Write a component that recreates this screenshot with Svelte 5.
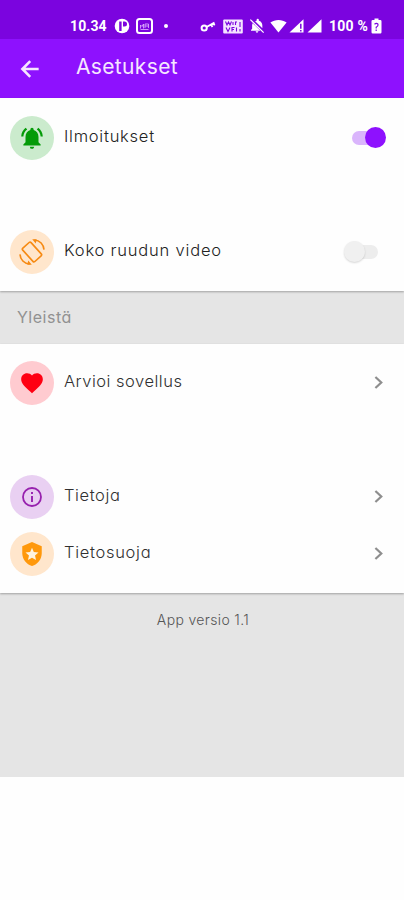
<script>
  let notifications = $state(true);
  let fullscreen = $state(false);
</script>

{#snippet chevron()}
  <svg class="chevron" width="24" height="24" viewBox="0 0 24 24"><path d="M9.400 6 15.300 11.500 9.400 17" fill="none" stroke="#8e8e8e" stroke-width="2.2" /></svg>
{/snippet}

<div class="screen">
  <div class="status">
    <span class="time">10.34</span>
    <svg class="parking" width="16" height="16" viewBox="0 0 16 16">
      <circle cx="8" cy="8" r="7.3" fill="#fff" />
      <path d="M5.200 13V3.500H7.600V13zM9 3.500H10.500a2.500 2.500 0 0 1 0 5H9z" fill="#7b04df" />
    </svg>
    <svg class="frame" width="17" height="16" viewBox="0 0 17 16">
      <rect x="1" y="1" width="15" height="14" rx="2.5" fill="none" stroke="#fff" stroke-width="2" />
      <path d="M4.500 10.500V7L6 8.500 7.500 6V10.500M9 10V6H12.500V10M9 8H12.500M4.500 11.500H12.500" fill="none" stroke="#e2b8ff" stroke-width=".8" />
    </svg>
    <span class="dot"></span>
    <svg class="key" width="16" height="14" viewBox="0 0 16 14">
      <circle cx="4.200" cy="9" r="2.600" fill="none" stroke="#fff" stroke-width="2" />
      <path d="M6.500 8 14.500 3.600M11 5.600 12.500 8M13.500 4.200 14.600 6.300" fill="none" stroke="#fff" stroke-width="1.8" />
    </svg>
    <svg class="wifi-call" width="20" height="15" viewBox="0 0 20 15">
      <rect x=".2" y=".5" width="19.600" height="14" rx="1" fill="#f4e4ff" />
      <path d="M2.500 2.500 4 6 5.500 3 7 6 8.500 2.500M10 3V6M12.500 6V3H14M3 8.500 5 12.500 7 8.500M9 12.500V8.500H11.500M9 10.500H11M13.500 8.500V12.500M17 3V8M17 10V12.500" fill="none" stroke="#7b04df" stroke-width="1.1" />
    </svg>
    <svg class="bell-off" width="16" height="16" viewBox="0 0 24 24">
      <path d="M12 22c1.100 0 2-.9 2-2h-4a2 2 0 0 0 2 2zM20 15.500V11c0-3.400-2-6.200-5.200-6.900V3a1.600 1.600 0 0 0-3.400 0v1c-.8.2-1.500.5-2.200 1zM5.500 7.800A7.500 7.500 0 0 0 4.700 11v5.200L3 18v1h14z" fill="#fff" />
      <path d="M2 2.500 22 22" stroke="#fff" stroke-width="1.900" />
    </svg>
    <svg class="wifi" width="17" height="14" viewBox="0 0 17 14"><path d="M8.500 13.500.4 3.600C5 .2 12 .2 16.600 3.600z" fill="#fff" /></svg>
    <svg class="signal" width="15" height="14" viewBox="0 0 15 14">
      <path d="M.5 13.500 14.500.3V13.500z" fill="#fff" />
      <path d="M11.800 4.700V9.700M11.800 11V12.600" stroke="#7b04df" stroke-width="1.500" />
    </svg>
    <svg class="signal second" width="15" height="14" viewBox="0 0 15 14"><path d="M.5 13.500 14.500.3V13.500z" fill="#fff" /></svg>
    <span class="percent">100 %</span>
    <svg class="battery" width="11" height="16" viewBox="0 0 11 16">
      <path d="M3.500.5H7.500V2H9.300Q10.500 2 10.500 3.200V14.200Q10.500 15.500 9.300 15.500H1.700Q.5 15.500.5 14.200V3.200Q.5 2 1.700 2H3.500z" fill="#fff" />
      <path d="M3.500 6.200Q5.500 4.500 7 6.200 7.500 7.800 5.200 9.200V10.500M5.200 11.600V13" fill="none" stroke="#7b04df" stroke-width="1.200" />
    </svg>
  </div>

  <header>
    <svg width="26" height="26" viewBox="0 0 24 24"><path d="M20 12H5M12.200 4.800 5 12 12.200 19.200" fill="none" stroke="#f6e6ff" stroke-width="2.400" /></svg>
    <h1>Asetukset</h1>
  </header>

  <section class="card">
    <div class="row">
      <span class="badge green">
        <svg width="26" height="26" viewBox="0 0 24 24"><path fill="#049b08" d="M7.580 4.080 6.150 2.650C3.750 4.480 2.170 7.300 2.030 10.500h2c.15-2.650 1.510-4.970 3.550-6.420zM19.970 10.500h2c-.15-3.200-1.730-6.020-4.120-7.850l-1.420 1.430c2.020 1.450 3.390 3.770 3.540 6.420zM18 11c0-3.070-1.640-5.640-4.500-6.320V4a1.500 1.500 0 0 0-3 0v.68C7.630 5.360 6 7.920 6 11v5l-2 2v1h16v-1l-2-2zM12 22c1.100 0 2-.9 2-2h-4a2 2 0 0 0 2 2z" /></svg>
      </span>
      <span class="label notif">Ilmoitukset</span>
      <button class="switch" class:on={notifications} aria-label="Ilmoitukset" onclick={() => (notifications = !notifications)}><i></i></button>
    </div>
    <div class="row"></div>
    <div class="row">
      <span class="badge orange">
        <svg width="28" height="28" viewBox="0 0 24 24">
          <g fill="none" stroke="#f68a13" stroke-width="1.400">
            <rect x="7.200" y="4.300" width="9.600" height="15.400" rx="1.200" transform="rotate(-42 12 12)" />
            <path d="M14 1.700C18.800 1.900 22 5.500 22.300 10M10 22.300C5.200 22.100 2 18.500 1.700 14" />
          </g>
          <path d="M12.200 1 16 1.100 15.200 4.800zM11.800 23 8 22.900 8.800 19.200z" fill="#f68a13" />
        </svg>
      </span>
      <span class="label full">Koko ruudun video</span>
      <button class="switch" class:on={fullscreen} aria-label="Koko ruudun video" onclick={() => (fullscreen = !fullscreen)}><i></i></button>
    </div>
  </section>

  <h2>Yleistä</h2>

  <section class="card general">
    <div class="row">
      <span class="badge red">
        <svg width="26" height="26" viewBox="0 0 24 24"><path fill="#ff0012" d="m12 21.350-1.450-1.320C5.400 15.360 2 12.280 2 8.500 2 5.420 4.420 3 7.500 3c1.740 0 3.410.81 4.500 2.090C13.090 3.810 14.760 3 16.500 3 19.580 3 22 5.420 22 8.500c0 3.780-3.400 6.860-8.550 11.540z" /></svg>
      </span>
      <span class="label rate">Arvioi sovellus</span>
      {@render chevron()}
    </div>
    <div class="row"></div>
    <div class="row">
      <span class="badge purple">
        <svg width="24" height="24" viewBox="0 0 24 24"><circle cx="12" cy="12" r="9" fill="none" stroke="#9721ae" stroke-width="1.800" /><path d="M12 7V9M12 11V17" stroke="#9721ae" stroke-width="1.900" /></svg>
      </span>
      <span class="label about">Tietoja</span>
      {@render chevron()}
    </div>
    <div class="row">
      <span class="badge orange">
        <svg width="26" height="26" viewBox="0 0 24 24"><path fill="#ff980b" d="M12 1 3 4.800V11c0 5.550 3.840 10.740 9 12 5.160-1.260 9-6.450 9-12V4.800z" /><path fill="#fff3df" d="m12 6.200 1.700 3.900 4.300.4-3.200 2.900.9 4.200-3.700-2.200-3.700 2.200.9-4.200L6 10.500l4.300-.4z" /></svg>
      </span>
      <span class="label privacy">Tietosuoja</span>
      {@render chevron()}
    </div>
  </section>

  <footer>App versio 1.1</footer>
</div>

<style>
  :global(body) { margin: 0; background: #fefefe; }
  .screen {
    height: 777px;
    width: 404px;
    background: #e5e5e5;
    display: flex;
    flex-direction: column;
    font-family: Inter, sans-serif;
    font-feature-settings: "cv11", "ss03";
    overflow: hidden;
  }
  .status {
    box-sizing: border-box;
    height: 39px;
    flex: none;
    background: #7b04df;
    display: flex;
    align-items: center;
    padding: 13px 0 0 70px;
    color: #fff;
    font: 700 14px/24px Roboto, sans-serif;
    white-space: nowrap;
  }
  .status svg, .dot { flex: none; }
  .time { width: 44px; letter-spacing: 0.1px; }
  .percent { width: 42px; letter-spacing: 0.2px; }
  .frame { margin-left: 6px; }
  .dot { width: 4px; height: 4px; border-radius: 50%; background: #fff; margin: 0 32px 0 11px; }
  .wifi-call { margin-left: 7px; }
  .bell-off { margin-left: 6px; }
  .wifi { margin-left: 5px; }
  .signal { margin-left: 2px; }
  .second { margin: 0 7px 0 3px; }
  header {
    height: 59px;
    flex: none;
    background: #8e11fe;
    display: flex;
    align-items: center;
    padding-left: 17px;
  }
  h1 {
    margin: -3px 0 0 33px;
    font-size: 21px;
    font-weight: 400;
    line-height: 30px;
    color: #f6e6ff;
    letter-spacing: 0.35px;
  }
  .card {
    box-sizing: border-box;
    height: 193px;
    flex: none;
    padding: 11px 14px 0 10px;
    background: #fefefe;
    box-shadow: 0 1px 2px rgba(0, 0, 0, 0.3);
  }
  .general { height: 249px; padding-top: 10px; }
  .row { height: 57px; display: flex; align-items: center; }
  .badge {
    width: 44px;
    height: 44px;
    flex: none;
    border-radius: 50%;
    display: flex;
    align-items: center;
    justify-content: center;
  }
  .green { background: #cbebcd; }
  .orange { background: #ffe6cc; }
  .red { background: #ffcbd0; }
  .purple { background: #e9d0f2; }
  .label {
    margin: -4px auto 0 10px;
    font-size: 16.5px;
    font-weight: 300;
    line-height: 24px;
    color: #222;
    white-space: nowrap;
  }
  .notif { letter-spacing: 0.75px; }
  .full { letter-spacing: 0.8px; }
  .rate { letter-spacing: 0.5px; }
  .about { letter-spacing: 0.6px; }
  .privacy { letter-spacing: 0.7px; }
  .switch {
    border: 0;
    padding: 0;
    width: 26px;
    height: 14px;
    margin-right: 12px;
    border-radius: 7px;
    background: #ededed;
    display: flex;
    align-items: center;
  }
  .switch i {
    width: 21px;
    height: 21px;
    flex: none;
    margin-left: -8px;
    border-radius: 50%;
    background: #f0f0f0;
    box-shadow: 0 1px 2px rgba(0, 0, 0, 0.16);
  }
  .switch.on { background: #dab5fc; }
  .switch.on i { margin-left: 13px; background: #8e11fe; box-shadow: none; }
  .general .label { color: #303030; }
  h2 {
    margin: 0;
    height: 53px;
    flex: none;
    padding-left: 17px;
    font-size: 16px;
    font-weight: 400;
    line-height: 52px;
    letter-spacing: 0.5px;
    color: #919191;
  }
  footer {
    padding-top: 17px;
    padding-left: 2px;
    text-align: center;
    font-size: 14px;
    font-weight: 300;
    line-height: 20px;
    letter-spacing: 0.35px;
    color: #555;
  }
</style>
